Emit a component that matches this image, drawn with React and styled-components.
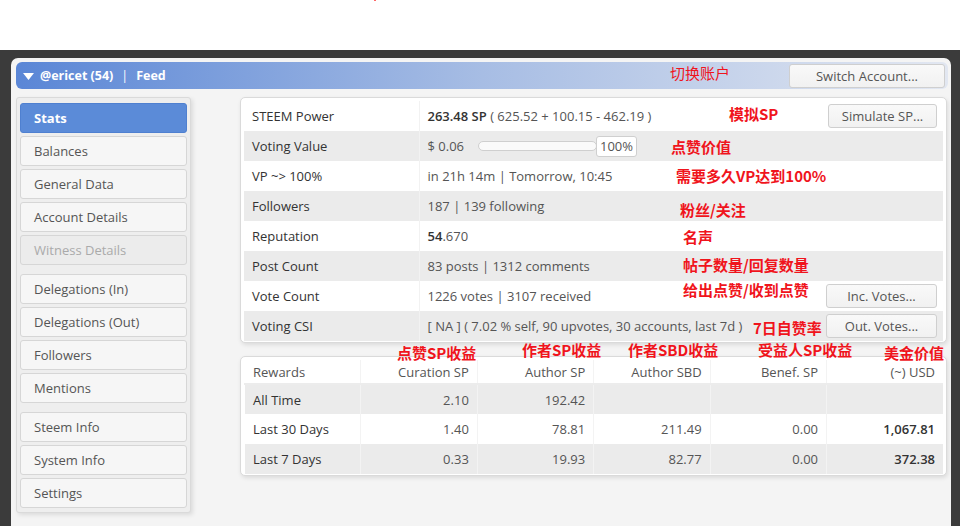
import styled, { createGlobalStyle } from "styled-components";

const GlobalStyle = createGlobalStyle`
  html, body {
    margin: 0;
    padding: 0;
    background: #fff;
  }
  body {
    font-family: "Open Sans", "Noto Sans CJK SC", sans-serif;
    font-size: 13px;
  }
  * {
    box-sizing: border-box;
  }
`;

const Page = styled.div`
  position: relative;
  width: 960px;
  height: 526px;
  overflow: hidden;
  background: #fff;
`;

const TopSpace = styled.div`
  height: 50px;
`;

const Dot = styled.span`
  position: absolute;
  left: 374px;
  top: 0;
  width: 2px;
  height: 1px;
  background: #f66;
`;

const Desktop = styled.div`
  display: flex;
  height: 476px;
  padding: 8px 9px 0 11px;
  background: #3b3b3b;
`;

const Window = styled.div`
  flex: 1;
  display: flex;
  flex-direction: column;
  padding: 4px 3px 0 5px;
  background: #f4f4f4;
  border-radius: 7px 7px 0 0;
`;

const TitleBar = styled.div`
  display: flex;
  align-items: center;
  height: 27px;
  padding: 0 3px 0 7px;
  border-radius: 6px;
  background: linear-gradient(90deg, #5a86d6 0%, #a7bde4 50%, #e2e7f1 100%);
  color: #fff;
  font-weight: 700;
  font-size: 12.5px;
`;

const Caret = styled.svg`
  width: 11px;
  height: 7px;
  margin-right: 6px;
  margin-top: 1px;
`;

const Sep = styled.span`
  margin: 0 8px;
  font-weight: 400;
`;

const Spacer = styled.div`
  flex: 1;
`;

const Button = styled.button`
  height: 24px;
  width: ${(p) => p.$w || 110}px;
  padding: 0;
  border: 1px solid #cfcfcf;
  border-radius: 3px;
  background: linear-gradient(#f9f9f9, #f1f1f1);
  color: #555;
  font-family: "Open Sans", sans-serif;
  font-size: 13px;
  cursor: pointer;
`;

const Body = styled.div`
  display: flex;
  align-items: flex-start;
  margin-top: 8px;
`;

const Sidebar = styled.nav`
  width: 175px;
  padding: 5px 3px 4px;
  border: 1px solid #dadada;
  border-radius: 3px;
  background: #eeeeee;
  box-shadow: 2px 2px 4px rgba(0, 0, 0, 0.1);
`;

const NavItem = styled.div`
  display: flex;
  align-items: center;
  height: 30px;
  margin-bottom: ${(p) => (p.$groupEnd ? 9 : 3)}px;
  padding-left: 13px;
  border: 1px solid ${(p) => (p.$active ? "#4f80d0" : "#d6d6d6")};
  border-radius: 3px;
  background: ${(p) => (p.$active ? "#5b8bd8" : p.$disabled ? "#ececec" : "#f6f6f6")};
  color: ${(p) => (p.$active ? "#fff" : p.$disabled ? "#aaa" : "#555")};
  font-weight: ${(p) => (p.$active ? 700 : 400)};
  font-size: 13px;

  &:last-child {
    margin-bottom: 0;
  }
`;

const Main = styled.div`
  flex: 1;
  margin-left: 49px;
  margin-right: 1px;
`;

const Panel = styled.div`
  margin-top: ${(p) => p.$mt || 0}px;
  padding: 3px 3px 1px;
  border: 1px solid #dadada;
  border-radius: 5px;
  background: #fff;
  box-shadow: 1px 2px 4px rgba(0, 0, 0, 0.1);
`;

const Table = styled.table`
  width: 100%;
  border-collapse: collapse;
  table-layout: fixed;
`;

const Row = styled.tr`
  height: 30px;
  background: ${(p) => (p.$grey ? "#ebebeb" : "#fff")};
`;

const Label = styled.td`
  width: 175px;
  padding: 0 8px;
  color: #333;
  border-right: 1px solid #f2f2f2;
  white-space: nowrap;
`;

const Value = styled.td`
  padding: 0 6px 0 8px;
  color: #555;
  white-space: nowrap;
`;

const ValueFlex = styled.div`
  display: flex;
  align-items: center;
  justify-content: space-between;
`;

const Strong = styled.b`
  color: #333;
  font-weight: 600;
`;

const Slider = styled.div`
  width: 119px;
  height: 10px;
  margin-left: 14px;
  border: 1px solid #cfcfcf;
  border-radius: 5px;
  background: #fafafa;
`;

const PctBox = styled.div`
  display: flex;
  align-items: center;
  justify-content: center;
  width: 41px;
  height: 21px;
  margin-left: -1px;
  border: 1px solid #cfcfcf;
  border-radius: 3px;
  background: #fff;
  color: #555;
`;

const Inline = styled.div`
  display: flex;
  align-items: center;
`;

const Cell = styled.td`
  padding: 0 8px;
  text-align: ${(p) => (p.$left ? "left" : "right")};
  color: ${(p) => (p.$dark ? "#333" : "#555")};
  font-weight: ${(p) => (p.$bold ? 600 : 400)};
  border-left: 1px solid ${(p) => (p.$first ? "transparent" : "#f3f3f3")};
  white-space: nowrap;
`;

const HeadRow = styled.tr`
  height: 24px;
  background: #fff;
  border-bottom: 2px solid #ececec;
`;

const Note = styled.span`
  position: absolute;
  left: ${(p) => p.$x}px;
  top: ${(p) => p.$y}px;
  color: #f0141c;
  font-family: "Noto Sans CJK SC", sans-serif;
  font-size: 15px;
  line-height: 15px;
  font-weight: ${(p) => (p.$light ? 400 : 700)};
  white-space: nowrap;
`;

const navGroups = [
  ["Stats", "Balances", "General Data", "Account Details", "Witness Details"],
  ["Delegations (In)", "Delegations (Out)", "Followers", "Mentions"],
  ["Steem Info", "System Info", "Settings"],
];

const rewards = [
  ["All Time", "2.10", "192.42", "", "", ""],
  ["Last 30 Days", "1.40", "78.81", "211.49", "0.00", "1,067.81"],
  ["Last 7 Days", "0.33", "19.93", "82.77", "0.00", "372.38"],
];

const notes = [
  { x: 670, y: 65, t: "切换账户", light: true },
  { x: 729, y: 106, t: "模拟SP" },
  { x: 671, y: 139, t: "点赞价值" },
  { x: 676, y: 168, t: "需要多久VP达到100%" },
  { x: 680, y: 202, t: "粉丝/关注" },
  { x: 683, y: 229, t: "名声" },
  { x: 683, y: 257, t: "帖子数量/回复数量" },
  { x: 683, y: 282, t: "给出点赞/收到点赞" },
  { x: 753, y: 320, t: "7日自赞率" },
  { x: 397, y: 345, t: "点赞SP收益" },
  { x: 522, y: 342, t: "作者SP收益" },
  { x: 628, y: 342, t: "作者SBD收益" },
  { x: 758, y: 342, t: "受益人SP收益" },
  { x: 884, y: 345, t: "美金价值" },
];

export default function App() {
  return (
    <Page>
      <GlobalStyle />
      <Dot />
      <TopSpace />
      <Desktop>
        <Window>
          <TitleBar>
            <Caret viewBox="0 0 11 7">
              <path d="M0 0 H11 L5.5 7 Z" fill="#fff" />
            </Caret>
            @ericet (54)
            <Sep>|</Sep>
            Feed
            <Spacer />
            <Button $w={156}>Switch Account...</Button>
          </TitleBar>

          <Body>
            <Sidebar>
              {navGroups.map((group, gi) =>
                group.map((name, i) => (
                  <NavItem
                    key={name}
                    $active={name === "Stats"}
                    $disabled={name === "Witness Details"}
                    $groupEnd={i === group.length - 1 && gi < navGroups.length - 1}
                  >
                    {name}
                  </NavItem>
                ))
              )}
            </Sidebar>

            <Main>
              <Panel>
                <Table>
                  <tbody>
                    <Row>
                      <Label>STEEM Power</Label>
                      <Value>
                        <ValueFlex>
                          <span>
                            <Strong>263.48 SP</Strong> ( 625.52 + 100.15 - 462.19 )
                          </span>
                          <Button $w={109}>Simulate SP...</Button>
                        </ValueFlex>
                      </Value>
                    </Row>
                    <Row $grey>
                      <Label>Voting Value</Label>
                      <Value>
                        <Inline>
                          $ 0.06
                          <Slider />
                          <PctBox>100%</PctBox>
                        </Inline>
                      </Value>
                    </Row>
                    <Row>
                      <Label>VP ~&gt; 100%</Label>
                      <Value>in 21h 14m | Tomorrow, 10:45</Value>
                    </Row>
                    <Row $grey>
                      <Label>Followers</Label>
                      <Value>187 | 139 following</Value>
                    </Row>
                    <Row>
                      <Label>Reputation</Label>
                      <Value>
                        <Strong>54</Strong>.670
                      </Value>
                    </Row>
                    <Row $grey>
                      <Label>Post Count</Label>
                      <Value>83 posts | 1312 comments</Value>
                    </Row>
                    <Row>
                      <Label>Vote Count</Label>
                      <Value>
                        <ValueFlex>
                          <span>1226 votes | 3107 received</span>
                          <Button $w={111}>Inc. Votes...</Button>
                        </ValueFlex>
                      </Value>
                    </Row>
                    <Row $grey>
                      <Label>Voting CSI</Label>
                      <Value>
                        <ValueFlex>
                          <span>[ NA ] ( 7.02 % self, 90 upvotes, 30 accounts, last 7d )</span>
                          <Button $w={111}>Out. Votes...</Button>
                        </ValueFlex>
                      </Value>
                    </Row>
                  </tbody>
                </Table>
              </Panel>

              <Panel $mt={13}>
                <Table>
                  <thead>
                    <HeadRow>
                      <Cell $left $first>Rewards</Cell>
                      <Cell>Curation SP</Cell>
                      <Cell>Author SP</Cell>
                      <Cell>Author SBD</Cell>
                      <Cell>Benef. SP</Cell>
                      <Cell>(~) USD</Cell>
                    </HeadRow>
                  </thead>
                  <tbody>
                    {rewards.map((r, i) => (
                      <Row key={r[0]} $grey={i !== 1}>
                        <Cell $left $first $dark>
                          {r[0]}
                        </Cell>
                        <Cell>{r[1]}</Cell>
                        <Cell>{r[2]}</Cell>
                        <Cell>{r[3]}</Cell>
                        <Cell>{r[4]}</Cell>
                        <Cell $bold $dark>
                          {r[5]}
                        </Cell>
                      </Row>
                    ))}
                  </tbody>
                </Table>
              </Panel>
            </Main>
          </Body>
        </Window>
      </Desktop>

      {notes.map((n) => (
        <Note key={n.t} $x={n.x} $y={n.y} $light={n.light}>
          {n.t}
        </Note>
      ))}
    </Page>
  );
}
